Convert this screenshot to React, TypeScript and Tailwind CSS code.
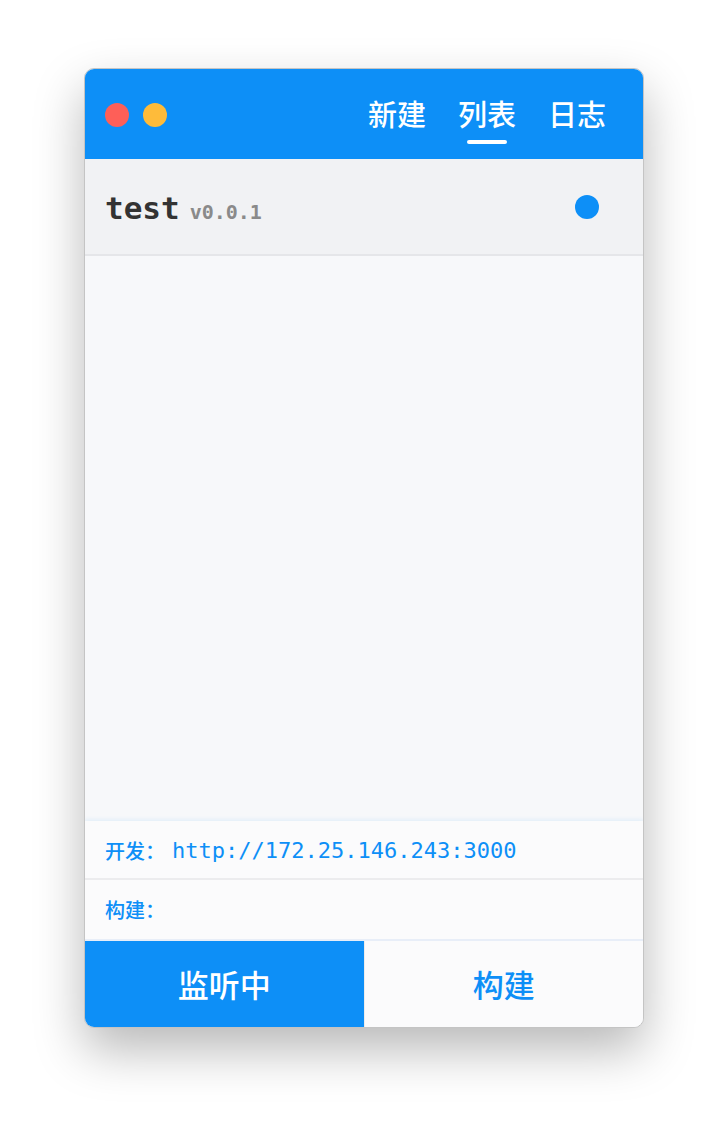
const cjk = '"Noto Sans CJK SC", "Noto Sans", sans-serif';
const mono = '"DejaVu Sans Mono", "Noto Sans CJK SC", monospace';

function Tab({ label, active }: { label: string; active?: boolean }) {
  return (
    <div className="flex flex-col items-center">
      <span className="text-[29px] leading-[28px] font-medium text-white">{label}</span>
      <span className={`mt-[13px] h-1 w-10 rounded-full ${active ? 'bg-white' : 'bg-transparent'}`} />
    </div>
  );
}

export default function App() {
  return (
    <div className="min-h-[1128px] bg-white pt-[68px]" style={{ fontFamily: cjk }}>
      <div className="mx-auto flex h-[960px] w-[560px] flex-col overflow-hidden rounded-[10px] border border-[#c4c4c4] bg-[#f7f8fa] shadow-[0_22px_50px_rgba(0,0,0,0.28)]">
        {/* title bar */}
        <div className="flex h-[90px] shrink-0 items-start justify-between bg-[#0d8ff7] pl-5 pr-[37px]">
          <div className="mt-[34px] flex gap-[14px]">
            <span className="h-6 w-6 rounded-full bg-[#fe5f58]" />
            <span className="h-6 w-6 rounded-full bg-[#febb3a]" />
          </div>
          <div className="mt-[30px] flex gap-[32px]">
            <Tab label="新建" />
            <Tab label="列表" active />
            <Tab label="日志" />
          </div>
        </div>

        {/* project row */}
        <div className="flex h-[97px] shrink-0 items-center justify-between border-b-2 border-[#e5e6e9] bg-[#f1f2f4] pl-5 pr-[44px]">
          <div className="flex items-baseline gap-[10px] pt-1" style={{ fontFamily: mono }}>
            <span className="text-[31px] font-bold text-[#333333]">test</span>
            <span className="text-[20px] font-bold text-[#8a8a8a]">v0.0.1</span>
          </div>
          <span className="h-6 w-6 rounded-full bg-[#0d8ff7]" />
        </div>

        <div className="flex-1" />

        {/* status rows */}
        <div className="shrink-0 bg-[#fbfbfc] shadow-[0_-2px_4px_rgba(13,143,247,0.08)]">
          <div className="flex h-[59px] items-center border-b-2 border-[#ececee] pl-5 pt-[2px] text-[20px] font-medium text-[#0d8ff7]">
            <span>开发：</span>
            <span className="ml-[7px] text-[22px] font-normal" style={{ fontFamily: mono }}>http://172.25.146.243:3000</span>
          </div>
          <div className="flex h-[59px] items-center pl-5 text-[20px] font-medium text-[#0d8ff7]">
            <span>构建：</span>
          </div>
        </div>

        {/* buttons */}
        <div className="flex h-[88px] shrink-0 border-t-2 border-[#e8eef8]">
          <button className="flex-1 bg-[#0d8ff7] text-[31px] font-medium text-white">监听中</button>
          <button className="flex-1 border-l border-[#ececec] bg-[#fbfbfc] text-[31px] font-medium text-[#0d8ff7]">构建</button>
        </div>
      </div>
    </div>
  );
}
